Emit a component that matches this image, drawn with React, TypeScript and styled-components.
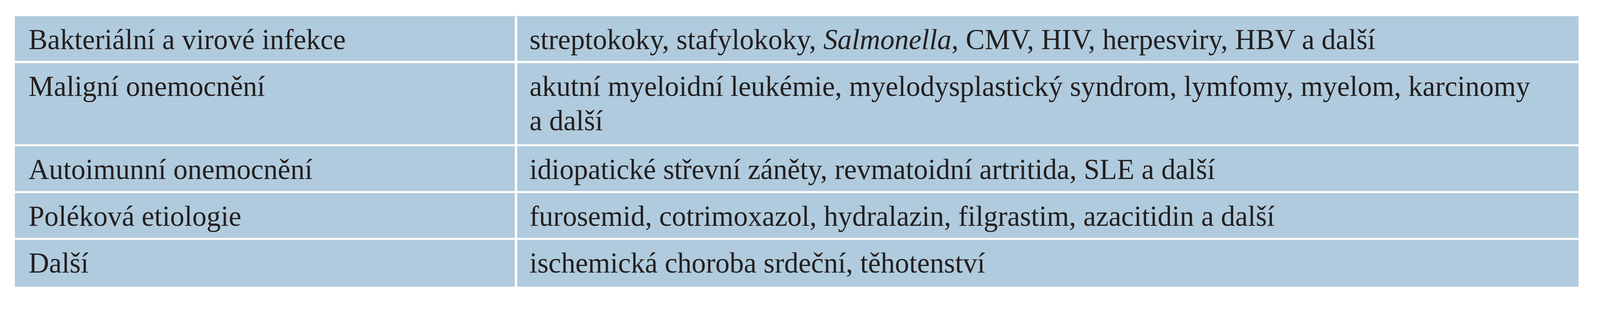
import React from 'react';
import styled, { createGlobalStyle } from 'styled-components';

// The layout is measured on a 4267px wide frame; scale it to the actual window
const S = typeof window !== 'undefined' && window.innerWidth ? window.innerWidth / 4267 : 1;
const px = (n: number) => `${(n * S).toFixed(2)}px`;

interface CauseRow {
    group: string;
    examples: React.ReactNode;
    extra?: number;
}

const rows: CauseRow[] = [
    {
        group: 'Bakteriální a virové infekce',
        examples: (
            <>
                streptokoky, stafylokoky, <em>Salmonella</em>, CMV, HIV, herpesviry, HBV a další
            </>
        ),
    },
    {
        group: 'Maligní onemocnění',
        examples: (
            <>
                akutní myeloidní leukémie, myelodysplastický syndrom, lymfomy, myelom, karcinomy
                <br />a další
            </>
        ),
        extra: 5,
    },
    {
        group: 'Autoimunní onemocnění',
        examples: 'idiopatické střevní záněty, revmatoidní artritida, SLE a další',
    },
    {
        group: 'Poléková etiologie',
        examples: 'furosemid, cotrimoxazol, hydralazin, filgrastim, azacitidin a další',
    },
    {
        group: 'Další',
        examples: 'ischemická choroba srdeční, těhotenství',
        extra: 6,
    },
];

const GlobalStyle = createGlobalStyle`
    html, body {
        margin: 0;
        padding: 0;
        background: #ffffff;
    }
`;

const Page = styled.div`
    width: ${px(4267)};
    height: ${px(800)};
    padding: ${px(43)} 0 0 ${px(40)};
    box-sizing: border-box;
    overflow: hidden;
`;

const Table = styled.div`
    width: ${px(4170)};
    display: grid;
    grid-template-columns: ${px(1333)} 1fr;
    gap: ${px(6)};
    border-top: ${px(2)} solid #c9dbe7;
    font-family: 'Liberation Serif', 'Times New Roman', serif;
    font-size: ${px(76)};
    line-height: ${px(92)};
    color: #231f20;
`;

const Cell = styled.div<{ $wide?: boolean; $extra?: number }>`
    background: #b0cbdd;
    padding-top: ${px(16)};
    padding-bottom: ${props => px(11 + (props.$extra || 0))};
    padding-left: ${props => px(props.$wide ? 33 : 36)};
    padding-right: ${px(40)};
    white-space: nowrap;

    em {
        font-style: italic;
    }
`;

export default function App() {
    return (
        <Page>
            <GlobalStyle />
            <Table>
                {rows.map(row => (
                    <React.Fragment key={row.group}>
                        <Cell $extra={row.extra}>{row.group}</Cell>
                        <Cell $wide $extra={row.extra}>{row.examples}</Cell>
                    </React.Fragment>
                ))}
            </Table>
        </Page>
    );
}
